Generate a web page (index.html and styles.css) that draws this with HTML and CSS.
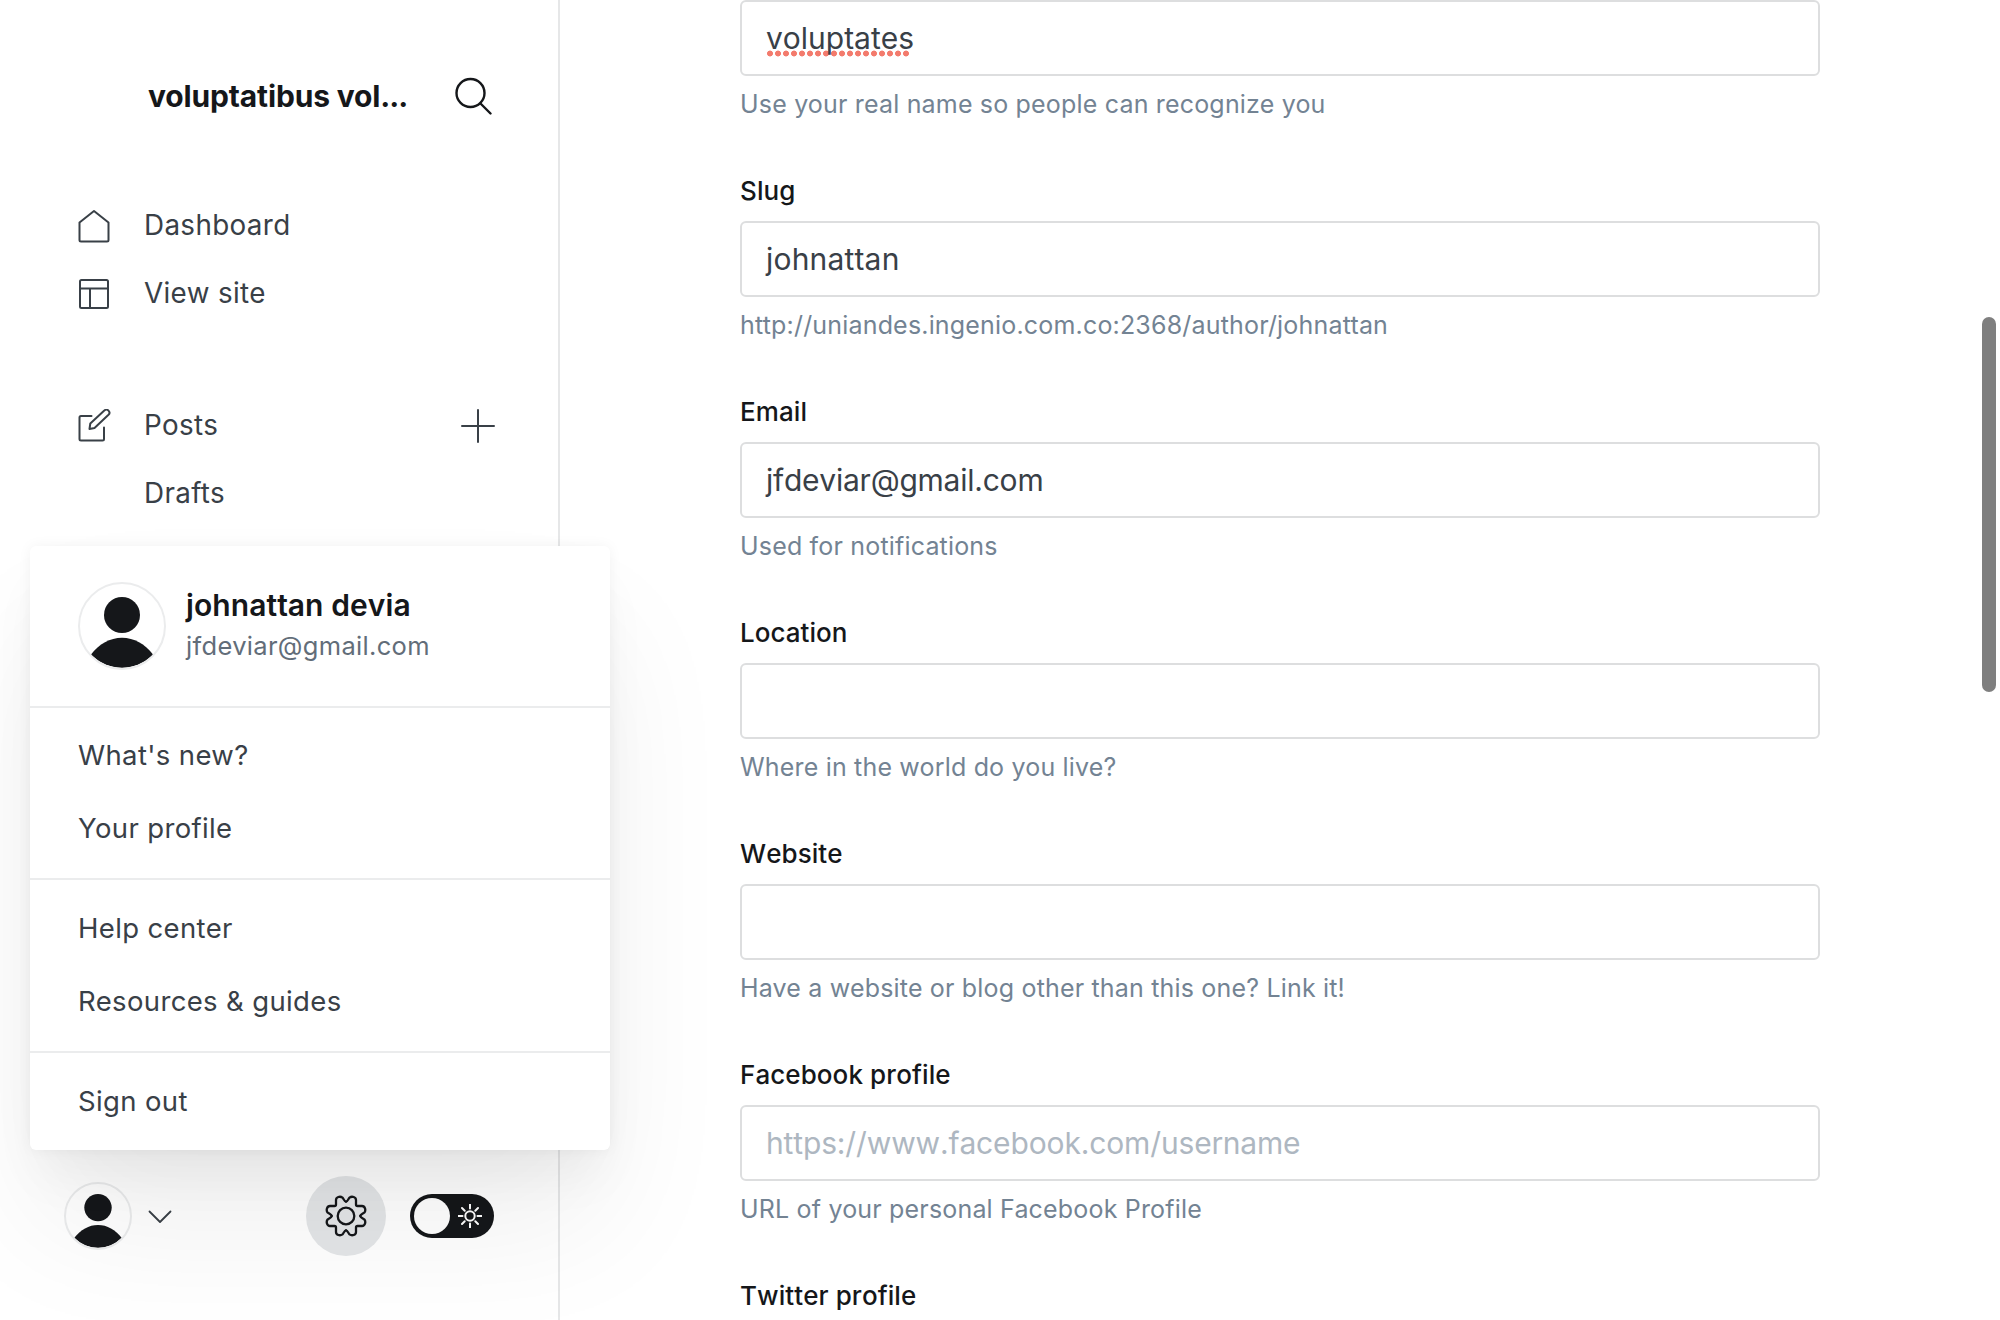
FILE: index.html
```html
<!DOCTYPE html>
<html lang="en">
<head>
<meta charset="utf-8">
<title>Staff settings</title>
<link rel="stylesheet" href="styles.css">
</head>
<body>
<svg class="defs" width="0" height="0" aria-hidden="true">
  <symbol id="user" viewBox="0 0 84 84">
    <circle cx="42" cy="31" r="18"/>
    <path d="M11 70.500C19 60 30 53.700 42 53.700s23 6.300 31 16.800a43 43 0 0 1-62 0z"/>
  </symbol>
</svg>
<div class="app">
  <nav class="sidebar">
    <header class="site">
      <span class="site-name">voluptatibus vol<span class="dots">...</span></span>
      <svg class="search" viewBox="0 0 38 38"><circle cx="15.500" cy="16" r="14"/><path d="M25.500 26.500 35.500 36.500"/></svg>
    </header>
    <a class="nav-item"><svg class="icon" viewBox="0 0 34 34"><path d="M2.500 31V13.500L17 2l14.500 11.500V31a1.500 1.500 0 0 1-1.500 1.500H4A1.500 1.500 0 0 1 2.500 31z"/></svg><span>Dashboard</span></a>
    <a class="nav-item"><svg class="icon" viewBox="0 0 34 34"><rect x="3" y="3" width="28" height="28" rx="1.500"/><path d="M3 11.500h28M13 11.500V31"/></svg><span>View site</span></a>
    <a class="nav-item posts"><svg class="icon" viewBox="0 0 34 34"><path d="M14.500 7H4A1.500 1.500 0 0 0 2.500 8.500V30A1.500 1.500 0 0 0 4 31.500h21.500A1.500 1.500 0 0 0 27 30V18.500"/><path d="M12.500 20l.800-5.500L27.300 1.600a2.900 2.900 0 0 1 4.200 4.200L17.500 19z"/></svg><span>Posts</span><svg class="plus" viewBox="0 0 34 34"><path d="M17 1v32M1 17h32"/></svg></a>
    <a class="nav-item sub"><span>Drafts</span></a>
    <footer class="tools">
      <svg class="avatar small"><use href="#user"/></svg>
      <svg class="chevron" viewBox="0 0 24 14"><path d="M1.500 1.500l10.500 10.500L22.500 1.500"/></svg>
      <span class="settings"><svg class="gear" viewBox="0 0 42 42">
        <circle cx="21" cy="21" r="8.300"/>
        <path id="cog" d="M21 6.700C22.500 6.700 23.500 3.500 24.500 2.600 27 .800 31 2 31 5v4.500Q31 11 32.500 11H37c3 0 4.200 4 2.400 6.500-.900 1-4.100 2-4.100 3.500"/>
        <use href="#cog" transform="rotate(90 21 21)"/>
        <use href="#cog" transform="rotate(180 21 21)"/>
        <use href="#cog" transform="rotate(270 21 21)"/>
      </svg></span>
      <span class="toggle"><i class="knob"></i><svg class="sun" viewBox="0 0 24 24"><circle cx="12" cy="12" r="4.700"/><path d="M12 .500V4.500M12 19.500v4M.500 12h4M19.500 12h4M4 4l2.700 2.700M17.300 17.300 20 20M4 20l2.700-2.700M17.300 6.700 20 4"/></svg></span>
    </footer>
  </nav>
  <main class="form">
    <div class="field"><div class="input"><span class="misspelt">voluptates</span></div><p class="hint">Use your real name so people can recognize you</p></div>
    <div class="field"><label>Slug</label><div class="input slug">johnattan</div><p class="hint">http://uniandes.ingenio.com.co:2368/author/johnattan</p></div>
    <div class="field"><label>Email</label><div class="input email">jfdeviar@gmail.com</div><p class="hint">Used for notifications</p></div>
    <div class="field"><label>Location</label><div class="input"></div><p class="hint">Where in the world do you live?</p></div>
    <div class="field"><label>Website</label><div class="input"></div><p class="hint">Have a website or blog other than this one? Link it!</p></div>
    <div class="field"><label>Facebook profile</label><div class="input placeholder">https://www.facebook.com/username</div><p class="hint">URL of your personal Facebook Profile</p></div>
    <div class="field"><label>Twitter profile</label></div>
  </main>
  <div class="scroll-thumb"></div>
  <section class="menu">
    <div class="profile">
      <svg class="avatar"><use href="#user"/></svg>
      <div class="who"><strong class="name">johnattan devia</strong><span class="mail">jfdeviar@gmail.com</span></div>
    </div>
    <div class="group first"><a>What's new?</a><a>Your profile</a></div>
    <div class="group"><a>Help center</a><a>Resources &amp; guides</a></div>
    <div class="group"><a>Sign out</a></div>
  </section>
</div>
</body>
</html>
```
FILE: styles.css
```css
* { box-sizing: border-box; }
body { margin: 0; background: #fff; color: #394047; font-family: Inter, sans-serif; font-optical-sizing: none; font-feature-settings: "calt" 0; }
.defs { display: block; }
svg { flex: none; fill: none; stroke: currentColor; stroke-width: 2; stroke-linecap: round; stroke-linejoin: round; }
.app { position: relative; display: flex; height: 1320px; overflow: hidden; }

.sidebar { display: flex; flex-direction: column; width: 560px; border-right: 2px solid #e6e7e8; }
.site { display: flex; align-items: center; justify-content: space-between; height: 62px; margin: 65px 65px 65px 148px; color: #15171a; }
.site-name { white-space: nowrap; font-size: 30px; font-weight: 700; line-height: 40px; letter-spacing: -.150px; }
.dots { letter-spacing: -1px; }
.search { width: 38px; height: 38px; stroke-width: 2.400; }
.nav-item { display: flex; align-items: center; height: 68px; padding: 0 63px 0 77px; font-size: 27.800px; letter-spacing: .350px; }
.nav-item span { padding-bottom: 2px; }
.icon { width: 34px; height: 34px; margin-right: 33px; }
.posts { margin-top: 64px; }
.plus { width: 34px; height: 34px; margin-left: auto; }
.sub { padding-left: 144px; }
.tools { display: flex; align-items: center; height: 80px; margin: auto 64px 64px; }

.avatar { width: 88px; height: 88px; border: 2px solid #ebeced; border-radius: 50%; fill: #15171a; stroke: none; }
.small { width: 68px; height: 68px; }
.chevron { width: 24px; height: 14px; margin: 2px 0 0 16px; stroke-width: 1.800; }
.settings { display: flex; align-items: center; justify-content: center; width: 80px; height: 80px; margin-left: auto; border-radius: 50%; background: #e4e6e8; color: #15171a; }
.gear { width: 42px; height: 42px; stroke-width: 2.300; }
.toggle { display: flex; align-items: center; justify-content: space-between; width: 84px; height: 44px; margin-left: 24px; padding: 0 12px 0 4px; border-radius: 22px; background: #15171a; color: #fff; }
.knob { width: 36px; height: 36px; border-radius: 50%; background: #fff; }
.sun { width: 24px; height: 24px; }

.form { width: 1080px; margin-left: 180px; }
.field { height: 221px; }
.field:first-child { height: 145px; }
label, .input, .name { font-kerning: none; }
label { display: block; height: 76px; padding-top: 29px; color: #15171a; font-size: 26px; font-weight: 500; line-height: 34px; letter-spacing: .080px; }
.input { height: 76px; padding: 0 24px; border: 2px solid #dddedf; border-radius: 6px; font-size: 30px; line-height: 72px; }
.slug { letter-spacing: .200px; }
.email { letter-spacing: -.230px; }
.misspelt { display: inline-block; height: 72px; background: radial-gradient(circle, #f37b6d 2.600px, transparent 3.300px) 0 48px / 8px 7px repeat-x; background-clip: content-box; padding-right: 4px; margin-right: -4px; width: 148px; }
.hint { margin: 11px 0 0; color: #738393; font-size: 25px; line-height: 35px; letter-spacing: .180px; }
.placeholder { color: #aeb7c1; letter-spacing: -.140px; }
.scroll-thumb { position: absolute; top: 317px; right: 4px; width: 14px; height: 375px; border-radius: 7px; background: #7f7f7f; }

.menu { position: absolute; top: 546px; left: 30px; width: 580px; height: 604px; border-radius: 6px; background: #fff; box-shadow: 0 0 14px rgba(0,0,0,.05), 0 34px 50px -10px rgba(0,0,0,.05), 0 80px 130px -10px rgba(0,0,0,.07); font-size: 27.500px; letter-spacing: .360px; }
.profile { display: flex; align-items: center; gap: 20px; height: 160px; padding: 0 48px; }
.who { padding-bottom: 2px; }
.name, .mail { display: block; white-space: nowrap; }
.name { color: #15171a; font-size: 30px; font-weight: 600; line-height: 40px; letter-spacing: .080px; }
.mail { font-size: 25.500px; line-height: 41px; color: #626d79; letter-spacing: .320px; }
.group { padding: 10.500px 48px 13.500px; border-top: 2px solid #ebeced; }
.first { padding: 9.500px 48px 13.500px; }
.group a { display: block; height: 73.500px; line-height: 74px; }
```
